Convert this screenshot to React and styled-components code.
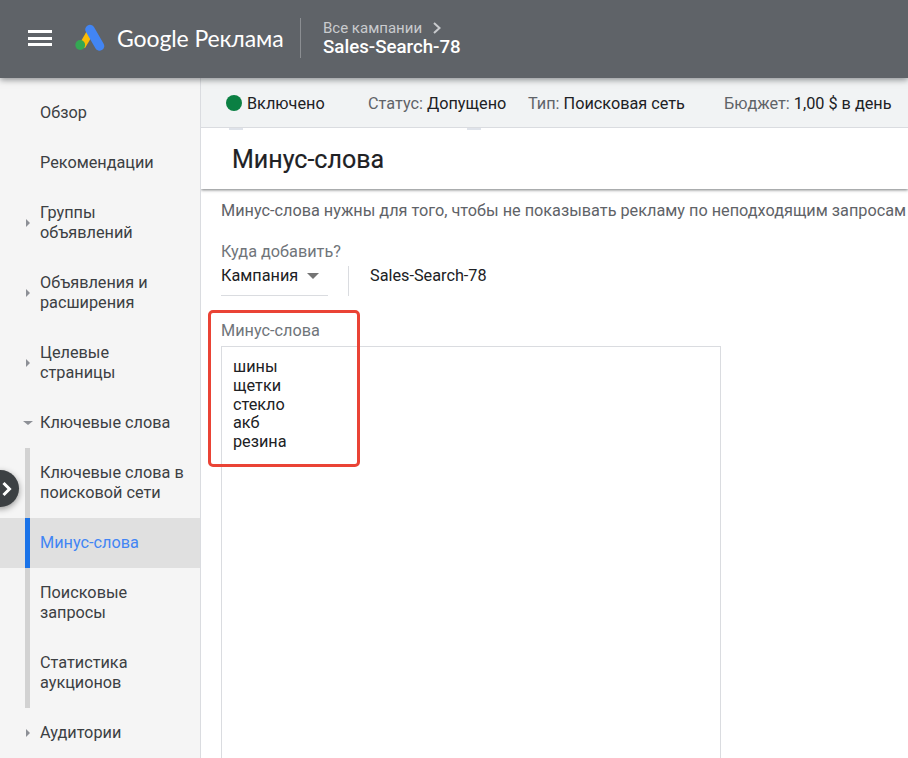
import styled, { createGlobalStyle } from "styled-components";

const GlobalStyle = createGlobalStyle`
  html, body {
    margin: 0;
    height: 100%;
    overflow: hidden;
    background: #fff;
    font-family: Roboto, "Liberation Sans", sans-serif;
  }
`;

const Page = styled.div`
  position: relative;
  width: 908px;
  height: 758px;
  overflow: hidden;
`;

const Header = styled.header`
  position: absolute;
  z-index: 5;
  top: 0;
  left: 0;
  width: 100%;
  height: 78px;
  background: #5f6368;
  box-shadow: 0 2px 6px rgba(60, 64, 67, 0.55);
  display: flex;
  align-items: center;
  color: #fff;
`;

const MenuIcon = styled.div`
  width: 24px;
  height: 16px;
  margin: 0 0 2px 28px;
  border-top: 3px solid #fff;
  border-bottom: 3px solid #fff;
  box-sizing: border-box;
  position: relative;
  &::after {
    content: "";
    position: absolute;
    left: 0;
    right: 0;
    top: 3.5px;
    height: 3px;
    background: #fff;
  }
`;

const Logo = styled.svg`
  margin: 0 0 3px 23px;
  width: 30px;
  height: 27px;
  flex: none;
`;

const Brand = styled.div`
  margin: 0 0 3px 12px;
  font-family: Lato, Roboto, sans-serif;
  font-size: 23px;
  letter-spacing: -0.1px;
  white-space: nowrap;
  width: 167px;
`;

const HeaderDivider = styled.div`
  width: 1px;
  height: 40px;
  background: #8b8e92;
  margin: 0 0 3px 16px;
`;

const Crumbs = styled.div`
  margin: 0 0 2px 22px;
  display: flex;
  flex-direction: column;
`;

const CrumbTop = styled.div`
  font-size: 15px;
  line-height: 18px;
  margin-top: 1px;
  color: #c9cbce;
  display: flex;
  align-items: center;
  gap: 11px;
`;

const CrumbTitle = styled.div`
  font-size: 18.7px;
  font-weight: 500;
  line-height: 21px;
`;

const Sidebar = styled.nav`
  position: absolute;
  top: 78px;
  left: 0;
  width: 201px;
  height: 680px;
  padding-top: 10px;
  box-sizing: border-box;
  background: #f5f5f5;
  border-right: 1px solid #dadce0;
`;

const NavItem = styled.div`
  position: relative;
  height: ${(p) => (p.$tall ? 70 : 50)}px;
  display: flex;
  align-items: center;
  padding-left: 40px;
  padding-right: 10px;
  font-size: 16.25px;
  line-height: 20px;
  color: ${(p) => (p.$active ? "#4285f4" : "#3c4043")};
  background: ${(p) => (p.$active ? "#e0e0e0" : "transparent")};
  &::before {
    content: "";
    display: ${(p) => (p.$sub ? "block" : "none")};
    position: absolute;
    left: 25px;
    top: 0;
    bottom: 0;
    width: 5px;
    background: ${(p) => (p.$active ? "#1a73e8" : "#d2d2d2")};
  }
`;

const NavText = styled.span`
  display: block;
  margin-top: -1px;
`;

const ArrowRight = styled.span`
  position: absolute;
  left: 26px;
  top: 50%;
  margin-top: -4px;
  border-left: 4px solid #8d9096;
  border-top: 4px solid transparent;
  border-bottom: 4px solid transparent;
`;

const ArrowDown = styled.span`
  position: absolute;
  left: 23px;
  top: 50%;
  margin-top: -2px;
  border-top: 4px solid #8d9096;
  border-left: 5px solid transparent;
  border-right: 5px solid transparent;
`;

const ExpandButton = styled.div`
  position: absolute;
  z-index: 4;
  left: -18px;
  top: 470px;
  width: 37px;
  height: 37px;
  border-radius: 50%;
  background: #3c4043;
  box-shadow: 0 2px 6px rgba(0, 0, 0, 0.4);
  display: flex;
  align-items: center;
  justify-content: flex-end;
  padding-right: 7px;
  box-sizing: border-box;
`;

const StatusBar = styled.div`
  position: absolute;
  top: 78px;
  left: 201px;
  right: 0;
  height: 50px;
  background: #f1f3f4;
  border-bottom: 1px solid #dadce0;
  box-sizing: border-box;
  font-size: 16.25px;
  color: #202124;
  white-space: nowrap;
`;

const StatusCell = styled.div`
  position: absolute;
  left: ${(p) => p.$left}px;
  top: 15px;
  line-height: 20px;
  display: flex;
  align-items: center;
  gap: 5px;
`;

const Dot = styled.span`
  width: 16px;
  height: 16px;
  border-radius: 50%;
  background: #0b8043;
`;

const StatusText = styled.span`
  position: relative;
  top: 1px;
`;

const Muted = styled.span`
  color: #5f6368;
`;

const TabStub = styled.div`
  position: absolute;
  top: 128px;
  left: ${(p) => p.$left}px;
  width: 14px;
  height: 2px;
  background: #dfe3ea;
`;

const TitleBar = styled.div`
  position: absolute;
  z-index: 2;
  top: 128px;
  left: 201px;
  right: 0;
  height: 61px;
  box-shadow: 0 1px 3px rgba(60, 64, 67, 0.7);
  clip-path: inset(0 0 -6px 0);
  display: flex;
  align-items: center;
  padding: 2px 0 0 31px;
  box-sizing: border-box;
`;

const Title = styled.h1`
  margin: 0;
  font-size: 25px;
  font-weight: 400;
  color: #202124;
  -webkit-text-stroke: 0.2px #202124;
`;

const Hint = styled.div`
  position: absolute;
  top: 201px;
  left: 221px;
  font-size: 16.25px;
  line-height: 20px;
  color: #5f6368;
  white-space: nowrap;
`;

const FieldLabel = styled.div`
  position: absolute;
  left: 221px;
  top: ${(p) => p.$top}px;
  font-size: 16.25px;
  line-height: 20px;
  color: #70757a;
`;

const Select = styled.div`
  position: absolute;
  left: 221px;
  top: 259px;
  width: 107px;
  height: 37px;
  box-sizing: border-box;
  border-bottom: 1px solid #dadce0;
  font-size: 16.25px;
  line-height: 34px;
  color: #202124;
  &::after {
    content: "";
    position: absolute;
    left: 86px;
    top: 14px;
    border-top: 6px solid #757575;
    border-left: 6.5px solid transparent;
    border-right: 6.5px solid transparent;
  }
`;

const SelectDivider = styled.div`
  position: absolute;
  left: 348px;
  top: 266px;
  width: 1px;
  height: 30px;
  background: #dadce0;
`;

const CampaignName = styled.div`
  position: absolute;
  left: 370px;
  top: 266px;
  font-size: 16.25px;
  line-height: 20px;
  color: #202124;
`;

const KeywordsBox = styled.div`
  position: absolute;
  left: 221px;
  top: 346px;
  width: 500px;
  height: 430px;
  box-sizing: border-box;
  border: 1px solid #dadce0;
  padding: 11px 11px;
  font-size: 16.25px;
  line-height: 18.75px;
  color: #202124;
`;

const Highlight = styled.div`
  position: absolute;
  z-index: 3;
  left: 208px;
  top: 310px;
  width: 152px;
  height: 157px;
  box-sizing: border-box;
  border: 3px solid #ea4335;
  border-radius: 5px;
`;

const keywords = ["шины", "щетки", "стекло", "акб", "резина"];

export default function App() {
  return (
    <Page>
      <GlobalStyle />
      <Header>
        <MenuIcon />
        <Logo viewBox="0 0 30 27">
          <path d="M3.5 21.5 L13 5 L19 9 L10 24 Z" fill="#fbbc04" />
          <path
            d="M15 5.5 L24.5 22"
            stroke="#4285f4"
            strokeWidth="9.5"
            strokeLinecap="round"
          />
          <circle cx="5.2" cy="21" r="4.9" fill="#34a853" />
        </Logo>
        <Brand>Google Реклама</Brand>
        <HeaderDivider />
        <Crumbs>
          <CrumbTop>
            Все кампании
            <svg width="8" height="12" viewBox="0 0 8 12">
              <path
                d="M1 1 L6.5 6 L1 11"
                fill="none"
                stroke="#c9cbce"
                strokeWidth="2"
              />
            </svg>
          </CrumbTop>
          <CrumbTitle>Sales-Search-78</CrumbTitle>
        </Crumbs>
      </Header>

      <Sidebar>
        <NavItem>
          <NavText>Обзор</NavText>
        </NavItem>
        <NavItem>
          <NavText>Рекомендации</NavText>
        </NavItem>
        <NavItem $tall>
          <ArrowRight />
          <NavText>
            Группы
            <br />
            объявлений
          </NavText>
        </NavItem>
        <NavItem $tall>
          <ArrowRight />
          <NavText>
            Объявления и
            <br />
            расширения
          </NavText>
        </NavItem>
        <NavItem $tall>
          <ArrowRight />
          <NavText>
            Целевые
            <br />
            страницы
          </NavText>
        </NavItem>
        <NavItem>
          <ArrowDown />
          <NavText>Ключевые слова</NavText>
        </NavItem>
        <NavItem $tall $sub>
          <NavText>
            Ключевые слова в
            <br />
            поисковой сети
          </NavText>
        </NavItem>
        <NavItem $sub $active>
          <NavText>Минус-слова</NavText>
        </NavItem>
        <NavItem $tall $sub>
          <NavText>
            Поисковые
            <br />
            запросы
          </NavText>
        </NavItem>
        <NavItem $tall $sub>
          <NavText>
            Статистика
            <br />
            аукционов
          </NavText>
        </NavItem>
        <NavItem>
          <ArrowRight />
          <NavText>Аудитории</NavText>
        </NavItem>
      </Sidebar>

      <ExpandButton>
        <svg width="11" height="16" viewBox="0 0 11 16">
          <path
            d="M2.5 2 L8.5 8 L2.5 14"
            fill="none"
            stroke="#fff"
            strokeWidth="3"
          />
        </svg>
      </ExpandButton>

      <StatusBar>
        <StatusCell $left={25}>
          <Dot />
          <StatusText>Включено</StatusText>
        </StatusCell>
        <StatusCell $left={167}>
          <StatusText>
            <Muted>Статус:</Muted> Допущено
          </StatusText>
        </StatusCell>
        <StatusCell $left={327}>
          <StatusText>
            <Muted>Тип:</Muted> Поисковая сеть
          </StatusText>
        </StatusCell>
        <StatusCell $left={523}>
          <StatusText>
            <Muted>Бюджет:</Muted> 1,00 $ в день
          </StatusText>
        </StatusCell>
      </StatusBar>

      <TabStub $left={229} />
      <TabStub $left={467} />

      <TitleBar>
        <Title>Минус-слова</Title>
      </TitleBar>

      <Hint>
        Минус-слова нужны для того, чтобы не показывать рекламу по неподходящим
        запросам
      </Hint>

      <FieldLabel $top={242}>Куда добавить?</FieldLabel>
      <Select>Кампания</Select>
      <SelectDivider />
      <CampaignName>Sales-Search-78</CampaignName>

      <FieldLabel $top={321}>Минус-слова</FieldLabel>
      <KeywordsBox>
        {keywords.map((word) => (
          <div key={word}>{word}</div>
        ))}
      </KeywordsBox>
      <Highlight />
    </Page>
  );
}
